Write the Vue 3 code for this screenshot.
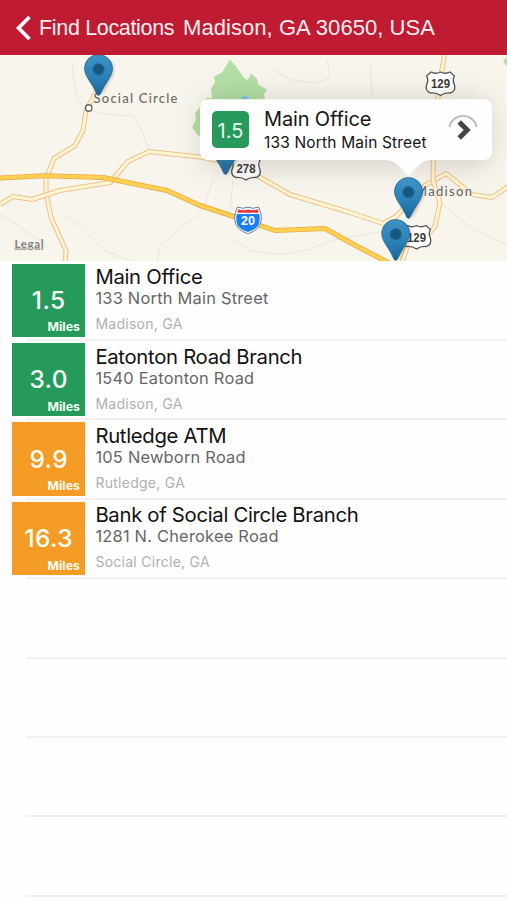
<script setup>
const branches = [
  { miles: '1.5', tone: 'near', name: 'Main Office', street: '133 North Main Street', city: 'Madison, GA' },
  { miles: '3.0', tone: 'near', name: 'Eatonton Road Branch', street: '1540 Eatonton Road', city: 'Madison, GA' },
  { miles: '9.9', tone: 'far', name: 'Rutledge ATM', street: '105 Newborn Road', city: 'Rutledge, GA' },
  { miles: '16.3', tone: 'far', name: 'Bank of Social Circle Branch', street: '1281 N. Cherokee Road', city: 'Social Circle, GA' },
]

const minorRoads = [
  'M65 264 L66 250 L51 217 L46 192 L46 178 L54 158 L75 145 L83 130 L86 110 L97 90',
  'M0 204 L13 196 L32 199 L60 190 L110 182 L128 161 L149 151 L204 157 L240 165 L262 178 L290 194 L350 212 L383 223 L396 216 L425 185 L446 173 L472 194 L492 197 L508 186',
  'M445 52 L440 80 L434 130 L433 180 L440 202 L435 226 L427 235 L408 244 L402 262',
]

const interstate = 'M-2 177.5 L45 175.3 L103 177 L167 190 L200 205 L234 216 L275 230 L325 228 L350 242 L390 263'

const pinsBehind = [
  { x: 98.5, y: 95 },
  { x: 225.5, y: 174 },
]
const pinsFront = [
  { x: 408.5, y: 218 },
  { x: 395.7, y: 260 },
]

const shields = [
  { x: 440.5, y: 83.5, label: '129' },
  { x: 246, y: 168, label: '278' },
  { x: 416.5, y: 237, label: '129' },
]
</script>

<template>
  <main class="screen">
    <header class="bar">
      <svg class="back" viewBox="0 0 18 26"><path d="M14.5 2 L3.5 13 L14.5 24" /></svg>
      <span class="back-label">Find Locations</span>
      <h1 class="title">Madison, GA 30650, USA</h1>
    </header>

    <section class="map">
      <svg class="map-art" viewBox="0 54.5 507 206.5">
        <defs>
          <linearGradient id="pinFill" x1="0" y1="0" x2="0" y2="1">
            <stop offset="0" stop-color="#3f93c5" />
            <stop offset="0.55" stop-color="#2b80b6" />
            <stop offset="1" stop-color="#1b659a" />
          </linearGradient>
          <filter id="soft" x="-20%" y="-60%" width="140%" height="240%"><feGaussianBlur stdDeviation="14" /></filter>
          <filter id="pinSoft" x="-50%" y="-50%" width="200%" height="200%"><feGaussianBlur stdDeviation="1.5" /></filter>
          <g id="pin">
            <path d="M3 0 L14 -20 Q18 -31 10 -35 L0 -20 Z" fill="#333" opacity="0.3" filter="url(#pinSoft)" />
            <path class="pin" d="M0 0 C-1.5 0 -2.5 -3 -4 -6 C-8 -14 -14 -20 -14 -27 A14 14 0 0 1 14 -27 C14 -20 8 -14 4 -6 C2.5 -3 1.5 0 0 0 Z" />
            <circle cy="-26.3" r="5.8" fill="#16597f" stroke="#2372a5" stroke-width="0.8" />
          </g>
        </defs>
        <rect y="54" width="507" height="208" fill="#f8f5ed" />
        <path class="park" d="M230 59 L236 66 L243 76 L247 80 L251 73 L257 78 L258 84 L267 89 L264 94 L266 104 L255 130 L204 136 L198 135 L192 127 L196 119 L195 113 L207 97 L212 98 L211 88 L215 82 L214 76 L222 72 Z" />
        <path class="park" d="M503 61 L508 55 L508 67 Z" />
        <ellipse cx="245" cy="98" rx="4" ry="2.5" fill="#83bfed" />
        <path class="track" d="M72 64 L76 94 L84 108 L104 113 L134 116 L142 130 L149 150 M0 213 L50 247 M66 214 L105 250 L130 260 M157 262 L160 245 L202 210 L214 178 M233 180 L230 210 M235 240 L250 250 L280 254 L310 249 L330 240 L400 228 M272 69 L292 79 L315 83 L330 77 L327 60 M370 60 L372 95 M440 202 L475 230 L507 244" />
        <g v-for="(road, i) in minorRoads" :key="i">
          <path class="road-edge" :d="road" />
          <path class="road-core" :d="road" />
        </g>
        <path class="highway-edge" :d="interstate" />
        <path class="highway-core" :d="interstate" />

        <circle cx="88.7" cy="107.5" r="3.2" fill="#fff" stroke="#666" stroke-width="1.4" />
        <text class="place" x="93.5" y="102.3" textLength="84">Social Circle</text>
        <text class="place" x="415" y="195.7" textLength="57">Madison</text>
        <text class="legal" x="14.5" y="247" textLength="29">Legal</text>

        <g v-for="(s, i) in shields" :key="'s' + i" :transform="`translate(${s.x} ${s.y})`">
          <path class="shield" d="M-9.5 -12 Q-5 -9.5 0 -12 Q5 -9.5 9.5 -12 L14 -8 Q11.5 -4 14 1 Q15.5 7 10 9 Q4 8.5 0 11.5 Q-4 8.5 -10 9 Q-15.5 7 -14 1 Q-11.5 -4 -14 -8 Z" />
          <text class="shield-text" x="0" y="4" textLength="19" lengthAdjust="spacingAndGlyphs">{{ s.label }}</text>
        </g>

        <g transform="translate(248 219.5)">
          <path class="inter-edge" d="M-10.5 -13 Q-5 -10.5 0 -12.8 Q5 -10.5 10.5 -13 Q13.4 -8 13.4 -1 Q12.6 10 0 13.7 Q-12.6 10 -13.4 -1 Q-13.4 -8 -10.5 -13 Z" />
          <path d="M-11.2 -6 H11.2 Q12.6 0 10.5 5 Q7.5 10 0 12 Q-7.5 10 -10.5 5 Q-12.6 0 -11.2 -6 Z" fill="#1980f4" />
          <path d="M-9.5 -10.8 Q-5 -9 0 -10.5 Q5 -9 9.5 -10.8 L10.8 -7.2 H-10.8 Z" fill="#e83344" />
          <text class="inter-text" x="0" y="5.3">20</text>
        </g>

        <use v-for="p in pinsBehind" :key="p.x" href="#pin" :x="p.x" :y="p.y" />

        <rect x="202" y="98" width="288" height="68" rx="10" fill="#55503f" opacity="0.22" filter="url(#soft)" />
        <path class="bubble" d="M209 98.7 H483 Q492 98.7 492 107.7 V150.5 Q492 159.5 483 159.5 H431 C421 159.5 416 168 408.5 176 C401 168 396 159.5 386 159.5 H209 Q200 159.5 200 150.5 V107.7 Q200 98.7 209 98.7 Z" />

        <use v-for="p in pinsFront" :key="p.x" href="#pin" :x="p.x" :y="p.y" />
      </svg>

      <div class="callout">
        <span class="callout-badge">1.5</span>
        <div class="callout-copy">
          <strong>Main Office</strong>
          <span>133 North Main Street</span>
        </div>
        <svg class="disclosure" viewBox="0 0 32 32">
          <path d="M2.3 14 A14 14 0 0 1 29.7 14" fill="none" stroke="#b9bcbd" stroke-width="1.8" />
          <path d="M12.2 9 L20.2 17 L12.2 25" fill="none" stroke="#424447" stroke-width="5" />
        </svg>
      </div>
    </section>

    <ul class="list">
      <li v-for="b in branches" :key="b.name" class="row">
        <div class="miles" :class="b.tone">
          <span class="miles-value">{{ b.miles }}</span>
          <span class="miles-unit">Miles</span>
        </div>
        <div class="info">
          <h2>{{ b.name }}</h2>
          <p class="street">{{ b.street }}</p>
          <p class="city">{{ b.city }}</p>
        </div>
      </li>
      <li v-for="n in 4" :key="n" class="row"></li>
    </ul>
  </main>
</template>

<style>
body {
  margin: 0;
  background: #fefefe;
}
</style>

<style scoped>
.screen {
  width: 507px;
  height: 900px;
  overflow: hidden;
  background: #fefefe;
  font-family: Inter, "Liberation Sans", sans-serif;
}
.bar {
  box-sizing: border-box;
  height: 54.5px;
  padding: 2px 0 0 15px;
  display: flex;
  align-items: center;
  background: #bf1b32;
  color: #fdeef0;
  font-family: "Liberation Sans", sans-serif;
}
.back {
  width: 18px;
  height: 26px;
  margin-right: 6px;
}
.back path {
  fill: none;
  stroke: #fff;
  stroke-width: 3.6;
}
.back-label {
  width: 144px;
  font-size: 21.5px;
  letter-spacing: -0.33px;
  white-space: nowrap;
}
.title {
  margin: 0;
  font-size: 22px;
  font-weight: 400;
  letter-spacing: 0.06px;
  white-space: nowrap;
}
.map {
  position: relative;
  height: 206.5px;
}
.map-art {
  display: block;
  width: 507px;
  height: 206.5px;
}
.park { fill: #b3dea4; }
.track {
  fill: none;
  stroke: #e9e6df;
  stroke-width: 1;
}
.road-edge, .road-core, .highway-edge, .highway-core {
  fill: none;
  stroke-linejoin: round;
}
.road-edge { stroke: #f0c28c; stroke-width: 5; }
.road-core { stroke: #fff6d6; stroke-width: 2.9; }
.highway-edge { stroke: #eda943; stroke-width: 5; }
.highway-core { stroke: #ffd052; stroke-width: 3.4; }
.place {
  font: 500 13px Lato, sans-serif;
  fill: #6d6b69;
  stroke: #f8f5ed;
  stroke-width: 2px;
  paint-order: stroke;
}
.legal {
  font: 700 11.5px Lato, sans-serif;
  fill: #85827f;
  text-decoration: underline;
}
.shield {
  fill: #fff;
  stroke: #55524f;
  stroke-width: 1.3;
}
.shield-text {
  font: 700 13px "Liberation Sans", sans-serif;
  fill: #3c3936;
  text-anchor: middle;
}
.inter-edge {
  fill: #fff;
  stroke: #6b7f9b;
  stroke-width: 1;
}
.inter-text {
  font: 700 12.5px "Liberation Sans", sans-serif;
  fill: #fff;
  text-anchor: middle;
}
.pin {
  fill: url(#pinFill);
  stroke: #205f87;
  stroke-width: 0.7;
}
.bubble { fill: #fefefe; }
.callout {
  position: absolute;
  left: 200px;
  top: 44.2px;
  width: 292px;
  height: 61.3px;
  box-sizing: border-box;
  padding: 0 13px 0 12px;
  display: flex;
  align-items: center;
}
.callout-badge {
  width: 37px;
  height: 37px;
  border-radius: 5px;
  background: #259a5b;
  color: #e9f8ef;
  font-size: 20px;
  line-height: 41px;
  text-align: center;
}
.callout-copy {
  flex: 1;
  margin-left: 15px;
  padding-top: 2px;
  display: flex;
  flex-direction: column;
  color: #151515;
  white-space: nowrap;
}
.callout-copy strong {
  font-size: 20px;
  font-weight: 400;
  line-height: 24px;
  letter-spacing: -0.15px;
}
.callout-copy span {
  font-size: 15.5px;
  line-height: 23px;
  letter-spacing: 0.17px;
}
.disclosure {
  width: 32px;
  height: 32px;
}
.list {
  margin: 0;
  padding: 0;
  list-style: none;
}
.row {
  position: relative;
  box-sizing: border-box;
  height: 79.4px;
  padding: 2.7px 0 0 12px;
  display: flex;
}
.row::after {
  content: "";
  position: absolute;
  left: 26px;
  right: 0;
  bottom: -0.7px;
  height: 2px;
  background: #f1f1f2;
}
.miles {
  position: relative;
  z-index: 1;
  width: 73.4px;
  height: 73.2px;
  box-sizing: border-box;
  padding: 20.1px 5px 0 0;
  display: flex;
  flex-direction: column;
  color: #f8fff9;
}
.near { background: #259a5b; }
.far { background: #f49c25; }
.miles-value {
  padding-left: 5px;
  font-size: 24.5px;
  font-weight: 500;
  line-height: 32px;
  text-align: center;
  letter-spacing: 0.4px;
}
.miles-unit {
  padding-right: 0.5px;
  font-size: 12.3px;
  font-weight: 700;
  line-height: 16px;
  text-align: right;
  margin-top: 3.6px;
}
.info {
  margin-left: 10px;
  padding-top: 0.5px;
  white-space: nowrap;
}
.info h2 {
  margin: 0;
  font-size: 20.3px;
  font-weight: 400;
  line-height: 25px;
  letter-spacing: -0.3px;
  color: #111;
}
.info p { margin: 0; }
.street {
  font-size: 16.4px;
  line-height: 19px;
  letter-spacing: 0.23px;
  color: #666;
}
.info .city {
  margin-top: 7px;
  font-size: 14px;
  line-height: 18px;
  letter-spacing: 0.27px;
  color: #b0b0b0;
}
</style>
